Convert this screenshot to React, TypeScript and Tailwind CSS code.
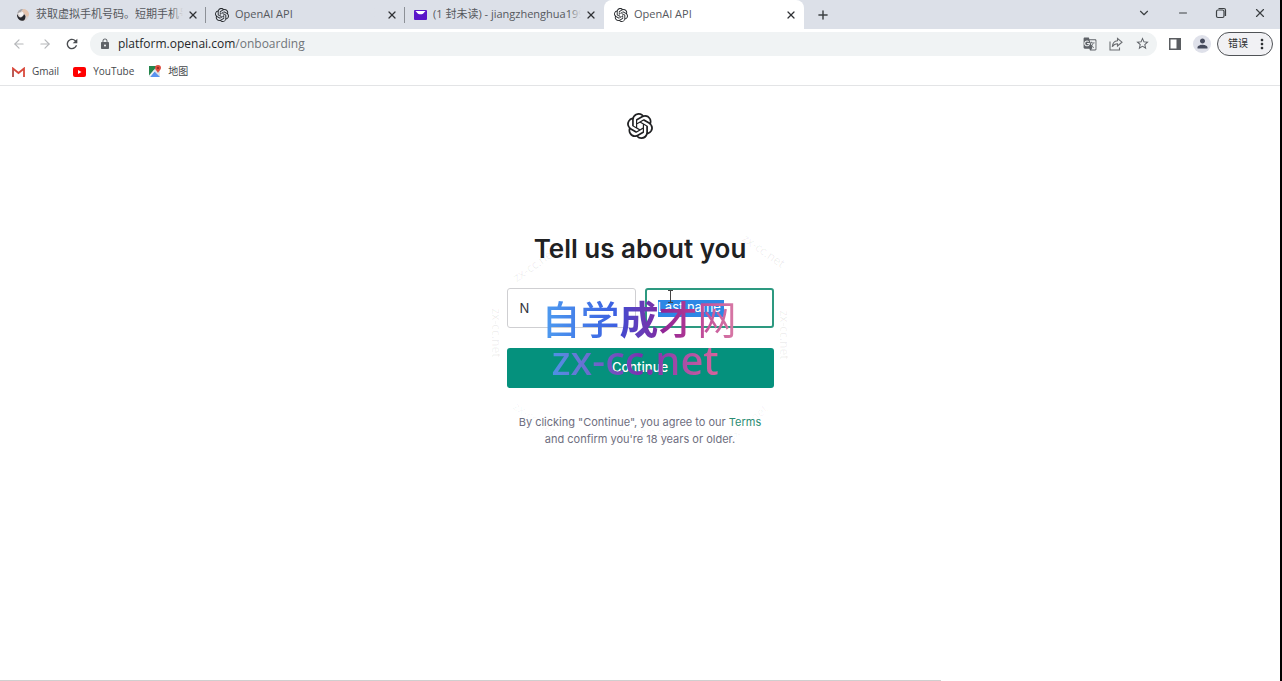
import type { ReactNode } from 'react';
import { SiOpenai } from 'react-icons/si';
import { ArrowLeft, ArrowRight, ChevronDown, Minus, Plus, X } from 'lucide-react';
import { MdGTranslate, MdLock, MdMoreVert, MdPerson, MdRefresh, MdStarBorder } from 'react-icons/md';

type TabProps = {
    icon: ReactNode
    title: string
    active?: boolean
    divider?: boolean
}

function Tab({ icon, title, active, divider }: TabProps){
    return(
        <div className={active
            ? "relative w-[200px] min-w-0 h-[29px] flex items-center pl-[10px] pr-[7px] bg-white rounded-t-lg"
            : "relative w-[199px] min-w-0 h-[29px] flex items-center pl-[9px] pr-[7px]"}>
            {icon}
            <div className="relative ml-[6px] mr-1 flex-1 min-w-0 overflow-hidden whitespace-nowrap text-[11px] text-[#55585d]">
                {title}
                <span className={active
                    ? "hidden"
                    : "absolute right-0 top-0 h-full w-3 bg-gradient-to-r from-transparent to-[#dce0e8]"} />
            </div>
            <button aria-label="Close tab" className="text-[#303236]">
                <X size={12} strokeWidth={2.5} />
            </button>
            {divider && <span className="absolute right-0 top-[7px] w-px h-4 bg-[#8c9096]" />}
        </div>
    )
}

function SiteIcon(){
    return(
        <svg width="14" height="14" viewBox="0 0 14 14" className="shrink-0">
            <circle cx="7" cy="7" r="6" fill="#d9d2d0" />
            <path d="M7 1C10.500 1 13 3.500 13 7L11 9 6 3Z" fill="#e3c3ae" />
            <path d="M1.200 5.500C2 3 4 1 7 1L4.500 4Z" fill="#a3a1a5" />
            <path d="M1 6 3 9C5 10 7 9 8 6L9.500 8C9.500 11 8.500 13 6 12.800 3 12.500 .8 10 1 6Z" fill="#26272d" />
            <path d="M2.500 5 7 4 7.500 7 4.500 9Z" fill="#f6f4f4" />
        </svg>
    )
}

function MailIcon(){
    return(
        <svg width="13" height="10" viewBox="0 0 13 10" className="shrink-0">
            <rect width="13" height="10" rx="1" fill="#5b16c9" />
            <path d="M1.500 1h10L9 3.700Q6.500 5 4 3.700Z" fill="#fff" />
        </svg>
    )
}

function GmailIcon(){
    return(
        <svg width="13" height="10" viewBox="0 0 13 10">
            <path d="M1 10V1.500L6.500 6 12 1.500V10" fill="none" stroke="#d9483b" strokeWidth="1.800" />
            <path d="M1 10V3" stroke="#b95c57" strokeWidth="2" />
        </svg>
    )
}

function YouTubeIcon(){
    return(
        <svg width="13" height="10" viewBox="0 0 13 10">
            <rect width="13" height="10" rx="2" fill="#f00" />
            <path d="M5 3v4l3.500-2Z" fill="#fff" />
        </svg>
    )
}

function MapIcon(){
    return(
        <svg width="13" height="13" viewBox="0 0 13 13">
            <rect x="1" y="1" width="11" height="11" rx="1" fill="#dfe3e6" />
            <path d="M1 1h8L1 11Z" fill="#25854c" />
            <path d="M2 12 6.500 6.500 12 12Z" fill="#5a93f0" />
            <path d="M1 10.500 6 5 7 6 2 12H1Z" fill="#f0f2f3" />
            <path d="M10 0a3 3 0 0 1 3 3c0 2-2.500 3-3 5-.5-2-3-3-3-5a3 3 0 0 1 3-3Z" fill="#dd4b3e" />
            <circle cx="10" cy="3" r="1" fill="#8c2720" />
        </svg>
    )
}

function ShareIcon(){
    return(
        <svg width="14" height="14" viewBox="0 0 14 14" fill="none" stroke="#6b6e72" strokeWidth="1.100">
            <path d="M1 4.500V13h9.500v-2.500" />
            <path d="M8.500 1.500 13 5.200 8.500 9V6.800C6 6.800 4.500 7.800 3.300 9.800 3.500 6.500 5.200 4 8.500 3.700Z" />
        </svg>
    )
}

function Browser(){
    return(
        <header className="border-b border-[#e3e4e6]">
            <div className="h-[29px] flex bg-[#dce0e8] pl-[7px]">
                <div className="flex min-w-0">
                    <Tab icon={<SiteIcon />} title="获取虚拟手机号码。短期手机号码" divider />
                    <Tab icon={<SiOpenai size={14} color="#222529" className="shrink-0" />} title="OpenAI API" divider />
                    <Tab icon={<MailIcon />} title="(1 封未读) - jiangzhenghua199" />
                    <Tab icon={<SiOpenai size={14} color="#222529" className="shrink-0" />} title="OpenAI API" active />
                </div>
                <button aria-label="New tab" className="pl-3 text-[#3c4043]">
                    <Plus size={14} strokeWidth={2.5} />
                </button>
                <div className="ml-auto h-[25px] flex items-center gap-[26px] pr-[13px] text-[#3c4043]">
                    <button aria-label="Search tabs"><ChevronDown size={14} strokeWidth={2} /></button>
                    <button aria-label="Minimize"><Minus size={12} strokeWidth={2} /></button>
                    <button aria-label="Restore">
                        <svg width="12" height="12" viewBox="0 0 12 12" fill="none" stroke="currentColor" strokeWidth="1.200">
                            <rect x="1.500" y="3" width="7.500" height="7.500" rx="1.500" />
                            <path d="M3.500 1.500H9a1.500 1.500 0 0 1 1.500 1.500v6" />
                        </svg>
                    </button>
                    <button aria-label="Close"><X size={14} strokeWidth={2} /></button>
                </div>
            </div>
            <div className="h-[29px] flex items-center pl-3 pr-[7px]">
                <button aria-label="Back" className="text-[#b5b7ba]"><ArrowLeft size={14} strokeWidth={2} /></button>
                <button aria-label="Forward" className="ml-3 text-[#b5b7ba]"><ArrowRight size={14} strokeWidth={2} /></button>
                <button aria-label="Reload" className="ml-3 text-[#4a4d51]"><MdRefresh size={16} /></button>
                <div className="ml-[10px] h-6 flex-1 min-w-0 flex items-center rounded-full bg-[#f0f3f4] pl-[9px] pr-[7px] text-[#5f6368]">
                    <MdLock size={12} />
                    <span className="ml-[7px] flex-1 text-[12px] text-[#70757a]">
                        <span className="text-[#25272a]">platform.openai.com</span>/onboarding
                    </span>
                    <div className="flex items-center gap-3">
                        <button aria-label="Translate"><MdGTranslate size={14} /></button>
                        <button aria-label="Share"><ShareIcon /></button>
                        <button aria-label="Bookmark"><MdStarBorder size={15} /></button>
                    </div>
                </div>
                <button aria-label="Side panel" className="ml-3">
                    <svg width="12" height="12" viewBox="0 0 12 12">
                        <path d="M0 0h12v12H0ZM1.500 1.500v9H7.500v-9Z" fill="#5a5d61" fillRule="evenodd" />
                    </svg>
                </button>
                <button aria-label="Profile" className="ml-3 size-[18px] flex items-center justify-center rounded-full bg-[#dfe1ea] text-[#454a5c]">
                    <MdPerson size={15} />
                </button>
                <button className="ml-[6px] h-6 w-14 flex items-center justify-center gap-[6px] rounded-full border border-[#505357] bg-[#f1f1f4] pl-1 text-[10px] text-[#2b2d30]">
                    错误
                    <MdMoreVert size={16} className="-mr-1" />
                </button>
            </div>
            <nav className="h-[27px] flex items-center gap-[14px] pl-3 text-[10px] text-[#45484c]">
                <a href="#gmail" className="flex items-center gap-[7px]"><GmailIcon />Gmail</a>
                <a href="#youtube" className="flex items-center gap-[7px]"><YouTubeIcon />YouTube</a>
                <a href="#maps" className="flex items-center gap-[7px]"><MapIcon />地图</a>
            </nav>
        </header>
    )
}

function Watermark(){
    return(
        <div aria-hidden="true" className="pointer-events-none absolute inset-0 whitespace-nowrap font-['Noto_Sans','Noto_Sans_CJK_SC',sans-serif]">
            <div className="absolute left-[35px] top-[7px] flex text-[39px] leading-[48px] text-transparent">
                <span className="bg-gradient-to-r from-[#4f9df0] to-[#3c5be0] bg-clip-text font-medium">自学</span>
                <span className="bg-gradient-to-r from-[#4149cf] to-[#7c2ca5] bg-clip-text font-bold">成</span>
                <span className="bg-gradient-to-r from-[#8c2297] to-[#bc3c91] bg-clip-text font-medium">才</span>
                <span className="bg-gradient-to-r from-[#bd4798] to-[#d97ba5] bg-clip-text">网</span>
            </div>
            <div className="absolute left-[45px] top-[48px] text-[40px] leading-[48px] font-medium text-transparent bg-clip-text bg-gradient-to-r from-[#4b91e5] via-[#7a2bad] via-55% to-[#d9649b]">
                zx-cc.net
            </div>
            <span className="absolute left-[3px] -top-[32px] -rotate-[35deg] text-[12px] text-black/7">zx-cc.net</span>
            <span className="absolute left-[232px] -top-[46px] rotate-[35deg] text-[12px] text-black/7">zx-cc.net</span>
            <span className="absolute -left-[36px] top-[36px] rotate-90 text-[12px] text-black/7">zx-cc.net</span>
            <span className="absolute left-[252px] top-[38px] rotate-90 text-[12px] text-black/7">zx-cc.net</span>
            <span className="absolute left-[3px] top-[122px] rotate-[35deg] text-[12px] text-black/4">zx-cc.net</span>
            <span className="absolute left-[112px] top-[136px] text-[12px] text-black/4">zx-cc.net</span>
            <span className="absolute left-[216px] top-[126px] -rotate-[40deg] text-[12px] text-black/4">zx-cc.net</span>
        </div>
    )
}

export default function App(){
    return(
        <div className="min-h-screen flex flex-col bg-white border-r-2 border-black font-['Open_Sans','Noto_Sans_CJK_SC',sans-serif]">
            <Browser />
            <main className="flex-1 flex flex-col items-center pt-[27px] font-[Inter,'Noto_Sans_CJK_SC',sans-serif]">
                <SiOpenai size={26} color="#202123" />
                <h1 className="mt-[92px] text-[26px] leading-9 font-semibold text-[#202123]">Tell us about you</h1>
                <form className="relative mt-[21px] w-[267px]" onSubmit={(e) => e.preventDefault()}>
                    <div className="flex gap-[9px]">
                        <input
                            aria-label="First name"
                            defaultValue="N"
                            className="h-10 flex-1 min-w-0 rounded-[3px] border border-[#cfcfd2] px-3 text-[13px] text-[#353740] outline-none"
                        />
                        <label className="relative h-10 flex-1 min-w-0 flex items-center rounded-[3px] border-2 border-[#2d9980] px-[11px]">
                            <input
                                aria-label="Last name"
                                placeholder="Last name"
                                className="h-[17px] w-[66px] bg-[#2d87e5] text-[13px] placeholder:text-white outline-none"
                            />
                            <svg width="7" height="13" viewBox="0 0 7 13" className="absolute left-5 top-0" fill="none" stroke="#444">
                                <path d="M1 .5h5M3.500 .5v12M1 12.500h5" />
                            </svg>
                        </label>
                    </div>
                    <button type="submit" className="mt-5 h-10 w-full rounded-[3px] bg-[#05917d] text-[13px] font-medium text-white">
                        Continue
                    </button>
                    <Watermark />
                </form>
                <p className="mt-[26px] text-center text-[11px] leading-[17px] text-[#6e6e80]">
                    By clicking "Continue", you agree to our <a href="#terms" className="text-[#2c8d74]">Terms</a>
                    <br />
                    and confirm you're 18 years or older.
                </p>
            </main>
            <footer className="h-px w-[73.5%] bg-[#cfcfcf]" />
        </div>
    )
}
